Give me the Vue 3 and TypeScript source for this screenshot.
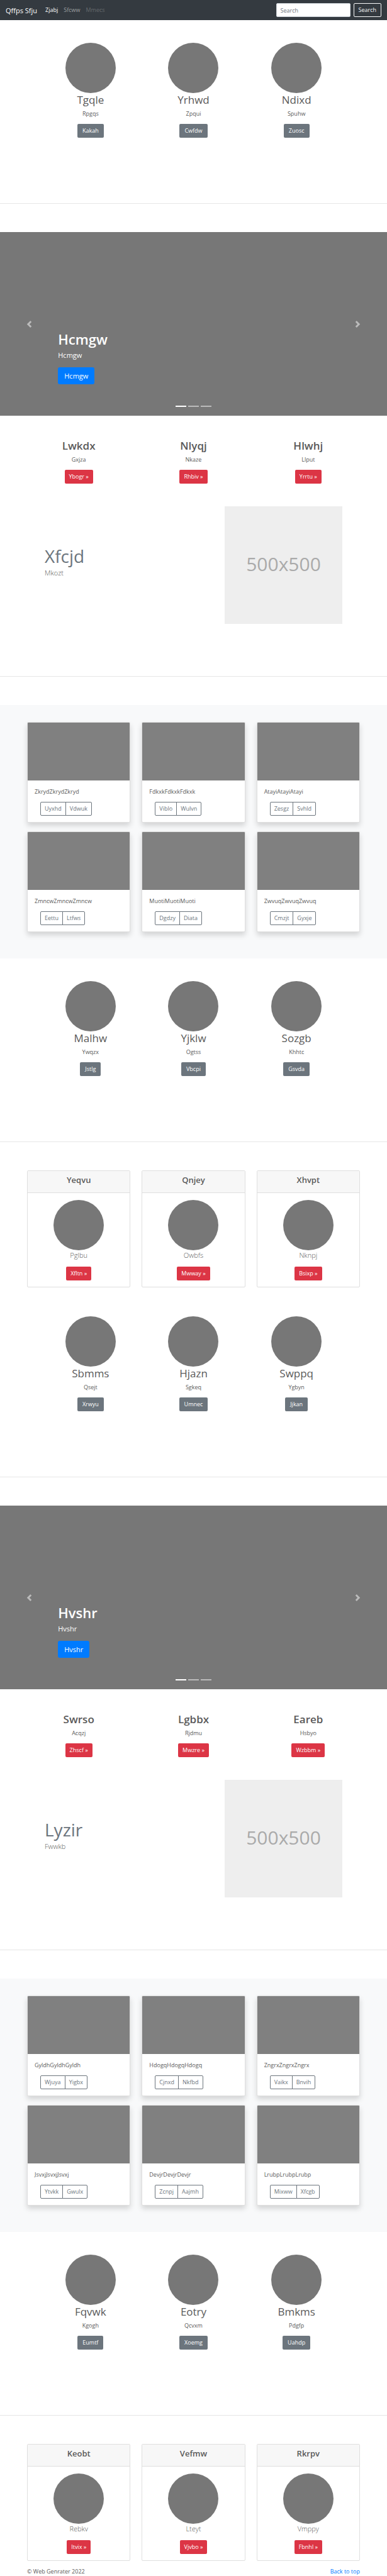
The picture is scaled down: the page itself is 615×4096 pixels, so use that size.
<script setup lang="ts">
interface Profile { title: string; text: string; action: string }
interface Album { text: string; actions: [string, string] }
type Block =
  | { kind: 'profiles'; items: Profile[] }
  | { kind: 'slide'; title: string }
  | { kind: 'features'; items: Profile[] }
  | { kind: 'intro'; title: string; text: string }
  | { kind: 'album'; items: Album[] }
  | { kind: 'cards'; items: Profile[] }

const p = (title: string, text: string, action: string): Profile => ({ title, text, action })
const a = (word: string, first: string, second: string): Album => ({ text: word.repeat(3), actions: [first, second] })

const blocks: Block[] = [
  { kind: 'profiles', items: [p('Tgqle', 'Rpgqs', 'Kakah'), p('Yrhwd', 'Zpqui', 'Cwfdw'), p('Ndixd', 'Spuhw', 'Zuosc')] },
  { kind: 'slide', title: 'Hcmgw' },
  { kind: 'features', items: [p('Lwkdx', 'Gxjza', 'Ybogr'), p('Nlyqj', 'Nkaze', 'Rhbiv'), p('Hlwhj', 'Llput', 'Yrrtu')] },
  { kind: 'intro', title: 'Xfcjd', text: 'Mkozt' },
  {
    kind: 'album',
    items: [
      a('Zkryd', 'Uyxhd', 'Vdwuk'), a('Fdkxk', 'Viblo', 'Wulvn'), a('Atayi', 'Zesgz', 'Svhld'),
      a('Zmncw', 'Eettu', 'Ltfws'), a('Muoti', 'Dgdzy', 'Diata'), a('Zwvuq', 'Cmzjt', 'Gyxje'),
    ],
  },
  { kind: 'profiles', items: [p('Malhw', 'Ywqzx', 'Jstlg'), p('Yjklw', 'Ogtss', 'Vbcpi'), p('Sozgb', 'Khhtc', 'Gsvda')] },
  { kind: 'cards', items: [p('Yeqvu', 'Pglbu', 'Xfltn'), p('Qnjey', 'Owbfs', 'Mwway'), p('Xhvpt', 'Nknpj', 'Bsixp')] },
  { kind: 'profiles', items: [p('Sbmms', 'Qsejt', 'Xrwyu'), p('Hjazn', 'Sgkeq', 'Umnec'), p('Swppq', 'Ygbyn', 'Jjkan')] },
  { kind: 'slide', title: 'Hvshr' },
  { kind: 'features', items: [p('Swrso', 'Acqzj', 'Zhscf'), p('Lgbbx', 'Rjdmu', 'Mwzre'), p('Eareb', 'Hsbyo', 'Wzbbm')] },
  { kind: 'intro', title: 'Lyzir', text: 'Fwwkb' },
  {
    kind: 'album',
    items: [
      a('Gyldh', 'Wjuya', 'Yigbx'), a('Hdogq', 'Cjnxd', 'Nkfbd'), a('Zngrx', 'Vaikx', 'Bnvih'),
      a('Jsvxj', 'Ytvkk', 'Gwulx'), a('Devjr', 'Zcnpj', 'Aajmh'), a('Lrubp', 'Mixww', 'Xfcgb'),
    ],
  },
  { kind: 'profiles', items: [p('Fqvwk', 'Kgogh', 'Eumtf'), p('Eotry', 'Qcvxm', 'Xoemg'), p('Bmkms', 'Pdgfp', 'Uahdp')] },
  { kind: 'cards', items: [p('Keobt', 'Rebkv', 'Itvix'), p('Vefmw', 'Lteyt', 'Vjvbo'), p('Rkrpv', 'Vmppy', 'Fbnhl')] },
]
</script>

<template>
  <div id="top" class="page">
    <header class="navbar">
      <a class="brand" href="#top">Qffps Sfju</a>
      <nav class="links">
        <a class="active" href="#top">Zjabj</a>
        <a href="#top">Sfcww</a>
        <a class="disabled" href="#top" aria-disabled="true">Mmecs</a>
      </nav>
      <form class="search" @submit.prevent>
        <input type="search" placeholder="Search" aria-label="Search">
        <button class="btn outline-light" type="submit">Search</button>
      </form>
    </header>

    <main>
      <template v-for="(block, i) in blocks" :key="i">
        <template v-if="block.kind === 'profiles'">
          <section class="profiles">
            <div v-for="item in block.items" :key="item.title" class="column">
              <div class="avatar"></div>
              <h2>{{ item.title }}</h2>
              <p>{{ item.text }}</p>
              <a class="btn secondary" href="#top">{{ item.action }}</a>
            </div>
          </section>
          <hr>
        </template>

        <section v-else-if="block.kind === 'slide'" class="carousel">
          <button class="arrow" type="button" aria-label="Previous">
            <svg viewBox="0 0 8 8"><path d="M5.25 0l-4 4 4 4 1.5-1.5L4.25 4l2.5-2.5L5.25 0z" /></svg>
          </button>
          <div class="caption">
            <h1>{{ block.title }}</h1>
            <p>{{ block.title }}</p>
            <a class="btn primary" href="#top">{{ block.title }}</a>
          </div>
          <button class="arrow" type="button" aria-label="Next">
            <svg viewBox="0 0 8 8"><path d="M2.75 0l-1.5 1.5L3.75 4l-2.5 2.5L2.75 8l4-4-4-4z" /></svg>
          </button>
          <div class="indicators">
            <button v-for="n in 3" :key="n" type="button" :class="{ current: n === 1 }" :aria-label="`Slide ${n}`"></button>
          </div>
        </section>

        <section v-else-if="block.kind === 'features'" class="features">
          <div v-for="item in block.items" :key="item.title" class="column">
            <h2>{{ item.title }}</h2>
            <p>{{ item.text }}</p>
            <a class="btn danger" href="#top">{{ item.action }} »</a>
          </div>
        </section>

        <template v-else-if="block.kind === 'intro'">
          <section class="intro">
            <div class="words">
              <h2>{{ block.title }}</h2>
              <p>{{ block.text }}</p>
            </div>
            <div class="placeholder">500x500</div>
          </section>
          <hr>
        </template>

        <section v-else-if="block.kind === 'album'" class="album">
          <article v-for="item in block.items" :key="item.text" class="tile">
            <div class="thumb"></div>
            <div class="tile-body">
              <p>{{ item.text }}</p>
              <div class="group">
                <button v-for="label in item.actions" :key="label" class="btn outline" type="button">{{ label }}</button>
              </div>
            </div>
          </article>
        </section>

        <section v-else class="cards">
          <article v-for="item in block.items" :key="item.title" class="card">
            <h4>{{ item.title }}</h4>
            <div class="card-body">
              <div class="avatar"></div>
              <p>{{ item.text }}</p>
              <a class="btn danger" href="#top">{{ item.action }} »</a>
            </div>
          </article>
        </section>
      </template>
    </main>

    <footer>
      <span>© Web Genrater 2022</span>
      <a href="#top">Back to top</a>
    </footer>
  </div>
</template>

<style>
body {
  margin: 0;
  background: #fff;
}
</style>

<style scoped>
.page {
  font: 400 9px/14px "Open Sans", "Noto Sans", sans-serif;
  color: #5a5a5a;
}
.page *,
.page *::before {
  box-sizing: border-box;
}
h1, h2, h4, p {
  margin: 0;
}
a {
  color: #007bff;
  text-decoration: none;
}
hr {
  height: 1px;
  margin: 0 0 45px;
  border: 0;
  background: #e6e6e6;
}

.btn {
  display: inline-block;
  height: 22px;
  padding: 3px 7px;
  border: 1px solid transparent;
  border-radius: 2px;
  background: transparent;
  color: #fff;
  font: inherit;
  line-height: 14px;
  text-align: center;
}
.secondary { background: #6c757d; }
.danger { padding: 3px 6px; background: #dc3545; }
.outline-light { border-color: #f8f9fa; color: #f8f9fa; }
.outline { padding: 3px 6px; border-color: #6c757d; color: #6c757d; }
.primary {
  height: 27px;
  padding: 5px 9px;
  border-radius: 3px;
  background: #007bff;
  font-size: 11px;
  line-height: 15px;
}

.navbar {
  display: flex;
  align-items: center;
  height: 32px;
  padding: 0 9px;
  background: #343a40;
}
.brand {
  margin-right: 13px;
  color: #fff;
  font-size: 11px;
  line-height: 17px;
}
.links {
  display: flex;
  gap: 9px;
}
.links a { color: rgba(255, 255, 255, 0.5); }
.links .active { color: #fff; }
.links .disabled { color: rgba(255, 255, 255, 0.25); }
.search {
  display: flex;
  gap: 5px;
  margin-left: auto;
}
.search input {
  width: 118px;
  height: 22px;
  padding: 3px 6px;
  border: 1px solid #ced4da;
  border-radius: 2px;
  background: #fff;
  color: #495057;
  font: inherit;
  appearance: none;
}
.search input::placeholder { color: #6c757d; opacity: 1; }

.profiles {
  display: grid;
  grid-template-columns: repeat(3, 1fr);
  padding: 36px 62px 104px;
}
.column { text-align: center; }
.avatar {
  width: 80px;
  height: 80px;
  margin: 0 auto;
  border-radius: 50%;
  background: #777;
}
.column h2 {
  margin-bottom: 4px;
  font-size: 17px;
  font-weight: 400;
  line-height: 22px;
}
.column p { margin-bottom: 9px; }
.column .btn { vertical-align: top; }

.carousel {
  position: relative;
  display: grid;
  grid-template-columns: 15% 1fr 15%;
  height: 292px;
  background: #777;
  color: #fff;
}
.arrow {
  display: flex;
  align-items: center;
  justify-content: center;
  padding: 0;
  border: 0;
  background: none;
  opacity: 0.5;
}
.arrow svg {
  width: 11px;
  height: 11px;
  fill: #fff;
}
.caption {
  align-self: end;
  padding-bottom: 50px;
}
.caption h1 {
  margin-bottom: 4px;
  font-size: 22px;
  font-weight: 600;
  line-height: 28px;
}
.caption p {
  margin-bottom: 11px;
  font-size: 11px;
  line-height: 16px;
}
.caption .btn { vertical-align: top; }
.indicators {
  position: absolute;
  right: 0;
  bottom: 14px;
  left: 0;
  display: flex;
  justify-content: center;
  gap: 3px;
}
.indicators button {
  width: 17px;
  height: 2px;
  padding: 0;
  border: 0;
  background: #fff;
  opacity: 0.5;
}
.indicators .current { opacity: 1; }

.features {
  display: grid;
  grid-template-columns: repeat(3, 1fr);
  padding: 37px 34px 36px;
}
.features h2 { font-weight: 600; }

.intro {
  display: flex;
  align-items: center;
  justify-content: space-between;
  padding: 0 71px 83px;
}
.intro h2 {
  margin-bottom: 2px;
  color: #6c757d;
  font-size: 28px;
  font-weight: 400;
  line-height: 34px;
}
.intro p {
  margin-bottom: 12px;
  font-size: 11px;
  font-weight: 300;
  line-height: 16px;
}
.placeholder {
  display: grid;
  place-items: center;
  width: 187px;
  height: 187px;
  padding-bottom: 4px;
  background: #eee;
  color: #aaa;
  font-size: 30px;
}

.album {
  display: grid;
  grid-template-columns: repeat(3, 1fr);
  gap: 14px 18px;
  padding: 27px 43px 42px;
  background: #f8f9fa;
}
.tile {
  height: 160px;
  border: 1px solid #dfdfdf;
  border-radius: 2px;
  background: #fff;
  box-shadow: 0 5px 9px rgba(0, 0, 0, 0.15);
  overflow: hidden;
}
.thumb {
  height: 92px;
  background: #808080;
}
.tile-body { padding: 11px; }
.tile-body p { margin-bottom: 9px; }
.group {
  display: flex;
  padding-left: 9px;
}
.group .btn:first-child { border-radius: 2px 0 0 2px; }
.group .btn:last-child {
  margin-left: -1px;
  border-radius: 0 2px 2px 0;
}

.cards {
  display: grid;
  grid-template-columns: repeat(3, 1fr);
  gap: 18px;
  padding: 0 43px 10px;
  text-align: center;
}
.card {
  border: 1px solid #dfdfdf;
  border-radius: 2px;
}
.card h4 {
  padding: 6px 0 11px;
  border-bottom: 1px solid #dfdfdf;
  background: #f7f7f7;
  font-size: 13px;
  font-weight: 600;
  line-height: 17px;
}
.card-body { padding: 11px 11px 10px; }
.card p {
  margin-bottom: 10px;
  font-size: 11px;
  font-weight: 300;
  line-height: 16px;
}
.card .btn { vertical-align: top; }

footer {
  display: flex;
  justify-content: space-between;
  padding: 0 43px;
}
</style>
